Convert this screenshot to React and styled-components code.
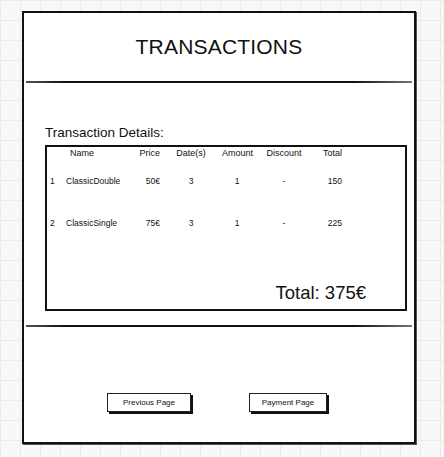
import React from 'react'
import styled, { createGlobalStyle } from 'styled-components'

const GlobalStyle = createGlobalStyle`
  html, body {
    margin: 0;
    padding: 0;
  }
  body {
    width: 444px;
    height: 457px;
    overflow: hidden;
    font-family: 'Liberation Sans', Arial, sans-serif;
    color: #111;
    background-color: #f8f8f8;
    background-image:
      linear-gradient(#ebebeb 1px, transparent 1px),
      linear-gradient(90deg, #ebebeb 1px, transparent 1px);
    background-size: 20px 20px;
  }
`

const rows = [
  { id: 1, name: 'ClassicDouble', price: '50€', dates: 3, amount: 1, discount: '-', total: 150 },
  { id: 2, name: 'ClassicSingle', price: '75€', dates: 3, amount: 1, discount: '-', total: 225 },
]

function App() {
  return (
    <>
      <GlobalStyle />
      <Frame>
        <Header>
          <Title>TRANSACTIONS</Title>
        </Header>
        <Divider />
        <Details>
          <Caption>Transaction Details:</Caption>
          <TableBox>
            <Grid>
              <Cell />
              <Cell $head $indent>Name</Cell>
              <Cell $head $align="right">Price</Cell>
              <Cell $head $align="center">Date(s)</Cell>
              <Cell $head $align="center">Amount</Cell>
              <Cell $head $align="center">Discount</Cell>
              <Cell $head $align="right">Total</Cell>
            </Grid>
            {rows.map((r) => (
              <Grid key={r.id} $row>
                <Cell $indent="3px">{r.id}</Cell>
                <Cell>{r.name}</Cell>
                <Cell $align="right">{r.price}</Cell>
                <Cell $align="center">{r.dates}</Cell>
                <Cell $align="center">{r.amount}</Cell>
                <Cell $align="center">{r.discount}</Cell>
                <Cell $align="right">{r.total}</Cell>
              </Grid>
            ))}
            <TotalLine>Total: 375€</TotalLine>
          </TableBox>
        </Details>
        <Divider $gap />
        <Buttons>
          <SketchButton>Previous Page</SketchButton>
          <SketchButton $narrow>Payment Page</SketchButton>
        </Buttons>
      </Frame>
    </>
  )
}

const Frame = styled.div`
  display: flex;
  flex-direction: column;
  box-sizing: border-box;
  margin: 11px 0 0 22px;
  width: 394px;
  height: 433px;
  background: #fff;
  border: 2px solid #111;
  box-shadow: 1px 1px 0 #555;
`

const Header = styled.div`
  display: flex;
  align-items: center;
  justify-content: center;
  height: 68px;
`

const Title = styled.h1`
  margin: 0;
  font-size: 21px;
  font-weight: 400;
  letter-spacing: 0.2px;
`

const Divider = styled.div`
  height: 2px;
  margin: 0 2px;
  background: linear-gradient(90deg, #555 0%, #111 10%, #111 85%, #777 100%);
  ${({ $gap }) => $gap && 'margin-top: 14px;'}
`

const Details = styled.div`
  display: flex;
  flex-direction: column;
  padding: 42px 7px 0 21px;
`

const Caption = styled.div`
  font-size: 13.5px;
  line-height: 16px;
  margin-bottom: 4px;
`

const TableBox = styled.div`
  display: flex;
  flex-direction: column;
  box-sizing: border-box;
  height: 166px;
  border: 2px solid #111;
  padding-top: 1px;
`

const Grid = styled.div`
  display: grid;
  grid-template-columns: 19px 61px 33px 62px 30px 64px 26px;
  font-size: ${({ $row }) => ($row ? '8.5px' : '9px')};
  line-height: 11px;
  margin-top: ${({ $row }) => ($row ? '17px' : '0')};
  & + & {
    margin-top: ${({ $row }) => ($row ? '31px' : '0')};
  }
  &:first-child + & {
    margin-top: 17px;
  }
`

const Cell = styled.div`
  text-align: ${({ $align }) => $align || 'left'};
  padding-left: ${({ $indent }) => ($indent === true ? '4px' : $indent || '0')};
  white-space: nowrap;
`

const TotalLine = styled.div`
  margin-top: auto;
  align-self: flex-end;
  padding: 0 39px 6px 0;
  font-size: 18.5px;
  line-height: 20px;
`

const Buttons = styled.div`
  display: flex;
  justify-content: center;
  gap: 58px;
  margin-top: 66px;
  padding-right: 4px;
`

const SketchButton = styled.button`
  box-sizing: border-box;
  width: ${({ $narrow }) => ($narrow ? '78px' : '84px')};
  height: 19px;
  padding: 0;
  background: #fff;
  border: 1px solid #222;
  box-shadow: 2px 2px 0 #111;
  font-family: 'Liberation Sans', Arial, sans-serif;
  font-size: 8px;
  color: #111;
  cursor: pointer;
`

export default App
